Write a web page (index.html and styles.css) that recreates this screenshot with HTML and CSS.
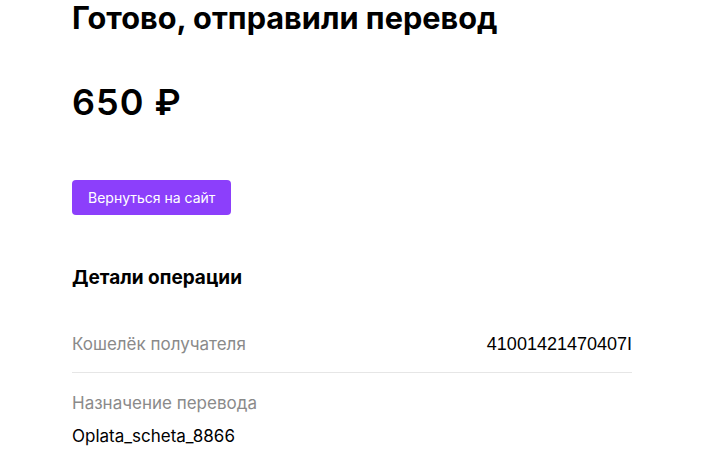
FILE: index.html
```html
<!DOCTYPE html>
<html>
  <head>
    <meta charset="UTF-8" />
    <title>Готово, отправили перевод</title>
    <link rel="stylesheet" href="styles.css">
  </head>
  <body>
    <main class="result">
      <h1 class="result-title">Готово, отправили перевод</h1>
      <div class="result-amount">650 ₽</div>
      <a class="back-btn" href="#">Вернуться на сайт</a>

      <section class="details">
        <h2 class="details-title">Детали операции</h2>
        <div class="details-row details-row--inline">
          <span class="details-label">Кошелёк получателя</span>
          <span class="details-value details-value--wallet">41001421470407I</span>
        </div>
        <div class="details-row">
          <div class="details-label">Назначение перевода</div>
          <div class="details-value">Oplata_scheta_8866</div>
        </div>
      </section>
    </main>
  </body>
</html>
```

FILE: styles.css
```css
* {
  box-sizing: border-box;
}
body {
  margin: 0;
  background: #fff;
  color: #000;
  font-family: Inter, "Noto Sans", sans-serif;
}
.result {
  width: 560px;
  margin-left: 72px;
}
.result-title {
  margin: 0;
  font-size: 30.7px;
  line-height: 36px;
  font-weight: 700;
}
.result-amount {
  margin-top: 44px;
  font-size: 36px;
  line-height: 44px;
  font-weight: 600;
  letter-spacing: 1px;
}
.back-btn {
  display: inline-block;
  margin-top: 56px;
  padding: 0 16px;
  height: 35px;
  line-height: 35px;
  background: #8c3ffb;
  color: #fff;
  font-size: 14px;
  border-radius: 4px;
  text-decoration: none;
}
.details {
  margin-top: 51px;
}
.details-title {
  margin: 0;
  font-size: 19px;
  line-height: 24px;
  font-weight: 700;
}
.details-row {
  padding: 16px 0;
  border-bottom: 1px solid #e6e6e6;
}
.details-row:last-child {
  border-bottom: none;
}
.details-row--inline {
  display: flex;
  justify-content: space-between;
  align-items: center;
  margin-top: 26px;
}
.details-label {
  color: #8a8a8a;
  font-size: 17px;
  line-height: 24px;
}
.details-value {
  font-size: 17px;
  line-height: 24px;
  margin-top: 9px;
}
.details-value--wallet {
  margin-top: 0;
  font-family: "Liberation Sans", sans-serif;
  font-size: 18px;
}
.details-row + .details-row {
  padding-top: 18px;
}
```
